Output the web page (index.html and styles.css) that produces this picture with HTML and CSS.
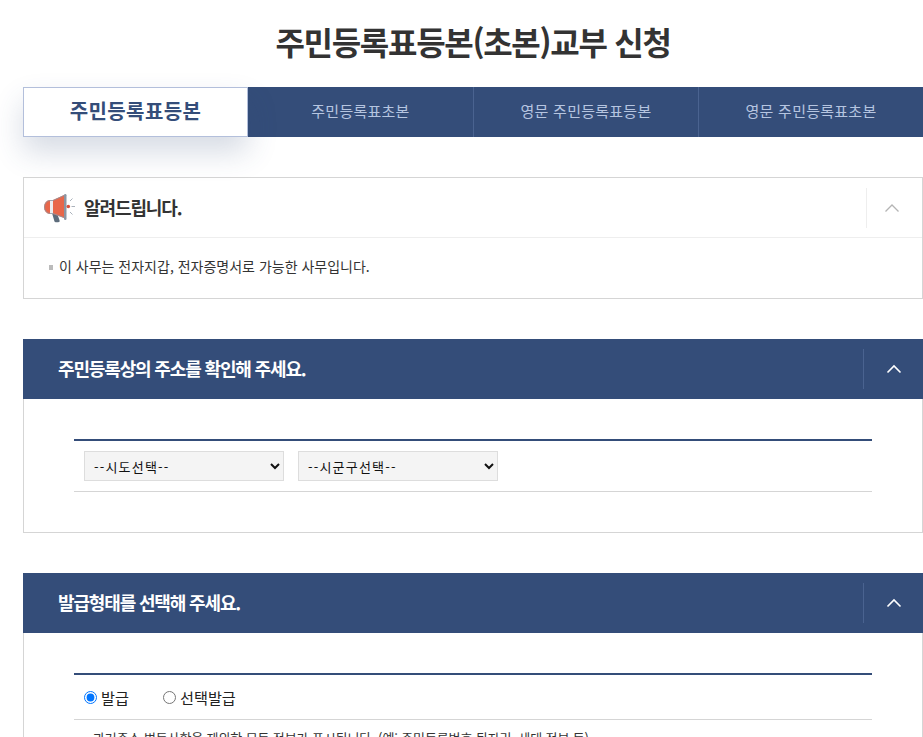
FILE: index.html
```html
<!DOCTYPE html>
<html lang="ko">
<head>
<meta charset="utf-8">
<title>주민등록표등본(초본)교부 신청</title>
<link rel="stylesheet" href="styles.css">
</head>
<body>
<main class="page">
  <h1 class="title">주민등록표등본(초본)교부 신청</h1>
  <ul class="tabs">
    <li class="tab active">주민등록표등본</li>
    <li class="tab">주민등록표초본</li>
    <li class="tab">영문 주민등록표등본</li>
    <li class="tab">영문 주민등록표초본</li>
  </ul>
  <section class="notice">
    <header class="notice-head">
      <svg class="mega" width="32" height="30" viewBox="0 0 32 30" aria-hidden="true">
        <path d="M8 20h5l2.500 7.200a1.500 1.500 0 0 1-1.400 2h-2.300a1.500 1.500 0 0 1-1.400-1z" fill="#5d6c7b"/>
        <path d="M7 7H6a6 7 0 0 0 0 14h1z" fill="#e8674a"/>
        <rect x="6" y="7" width="3" height="14" fill="#ecedf0"/>
        <path d="M9 7 20 2v23L9 21z" fill="#e8674a"/>
        <path d="M0.500 14a5.500 6.500 0 0 1 5.500-6.500h3L20 2.500" fill="none" stroke="#8b96a3" stroke-width=".8"/>
        <path d="M0.500 14a5.500 6.500 0 0 0 5.500 6.500h3L20 24.500" fill="none" stroke="#8b96a3" stroke-width=".8"/>
        <rect x="20" y="1" width="2.500" height="26" rx="1.200" fill="#8b96a3"/>
        <circle cx="24.300" cy="13.500" r="1.800" fill="#d9503c"/>
        <path d="M26 8l2.500-2.500M27.500 13.500H31M26 19l2.500 2.500" stroke="#aab2bb" stroke-width="1" fill="none"/>
      </svg>
      <h2 class="notice-title">알려드립니다.</h2>
      <span class="toggle toggle-light">
        <svg width="16" height="10" viewBox="0 0 16 10" aria-hidden="true"><path d="M1.500 8.500 8 2l6.500 6.500" fill="none" stroke="#b4b4b4" stroke-width="1.300"/></svg>
      </span>
    </header>
    <div class="notice-body">
      <p class="notice-item">이 사무는 전자지갑, 전자증명서로 가능한 사무입니다.</p>
    </div>
  </section>
  <section class="panel">
    <header class="panel-head">
      <h2 class="panel-title">주민등록상의 주소를 확인해 주세요.</h2>
      <span class="toggle toggle-dark">
        <svg width="16" height="10" viewBox="0 0 16 10" aria-hidden="true"><path d="M1.500 8.500 8 2l6.500 6.500" fill="none" stroke="#fff" stroke-width="1.600"/></svg>
      </span>
    </header>
    <div class="panel-body">
      <div class="field-row">
        <select class="sel"><option>--시도선택--</option></select>
        <select class="sel"><option>--시군구선택--</option></select>
      </div>
    </div>
  </section>
  <section class="panel">
    <header class="panel-head">
      <h2 class="panel-title">발급형태를 선택해 주세요.</h2>
      <span class="toggle toggle-dark">
        <svg width="16" height="10" viewBox="0 0 16 10" aria-hidden="true"><path d="M1.500 8.500 8 2l6.500 6.500" fill="none" stroke="#fff" stroke-width="1.600"/></svg>
      </span>
    </header>
    <div class="panel-body">
      <div class="field-row radios">
        <label class="radio"><input type="radio" name="kind" checked>발급</label>
        <label class="radio"><input type="radio" name="kind">선택발급</label>
      </div>
      <p class="desc">과거주소 변동사항을 제외한 모든 정보가 표시됩니다. (예: 주민등록번호 뒷자리, 세대 정보 등)</p>
    </div>
  </section>
</main>
</body>
</html>
```
FILE: styles.css
```css
html, body { margin: 0; padding: 0; height: 737px; overflow: hidden; background: #fff; }
body { font-family: "Noto Sans CJK KR", "Noto Sans", sans-serif; color: #333; }
.page { padding: 0 0 0 23px; }
.title { margin: 0; height: 87px; font-size: 32px; font-weight: 700; line-height: 83px; text-align: center; letter-spacing: -1.3px; color: #333; }
.tabs { display: grid; grid-template-columns: repeat(4, 225px); margin: 0 0 40px; padding: 0; list-style: none; height: 50px; background: #344d79; }
.tab { display: flex; align-items: center; justify-content: center; padding-bottom: 3px; font-size: 15px; letter-spacing: .25px; color: #b6c5e0; border-left: 1px solid #4a6390; box-sizing: border-box; }
.tab:nth-child(2) { border-left: 0; }
.tab.active { background: #fff; border: 1px solid #b3bfdb; color: #344d79; font-size: 20px; letter-spacing: .4px; font-weight: 700; box-shadow: 0 15px 30px rgba(52, 77, 121, .2); position: relative; }
.notice { border: 1px solid #d5d5d5; height: 122px; box-sizing: border-box; margin-bottom: 40px; }
.notice-head { display: flex; align-items: center; height: 59px; padding-left: 20px; border-bottom: 1px solid #eee; }
.mega { flex: none; }
.notice-title { margin: -2px 0 0 8px; font-size: 18px; font-weight: 700; letter-spacing: -1.1px; color: #333; flex: 1; }
.toggle { flex: none; display: flex; align-items: center; justify-content: center; box-sizing: border-box; height: 40px; border-left: 1px solid; }
.toggle-light { border-color: #eee; width: 56px; padding-right: 5px; }
.toggle-dark { border-color: #4a6390; width: 60px; }
.notice-body { padding: 18px 25px; }
.notice-item { margin: 0; padding-left: 10px; font-size: 14px; line-height: 20px; color: #333; position: relative; }
.notice-item::before { content: ""; position: absolute; left: 0; top: 9px; width: 4px; height: 5px; background: #bbb; }
.panel { border: 1px solid #d5d5d5; border-top: 0; box-sizing: border-box; margin-bottom: 40px; height: 194px; }
.panel-head { display: flex; align-items: center; justify-content: space-between; height: 60px; margin: 0 -1px; padding-left: 35px; background: #344d79; }
.panel-title { margin: -3px 0 0; font-size: 18px; font-weight: 700; letter-spacing: -1.15px; color: #fff; }
.panel-body { padding: 40px 50px 0; }
.field-row { display: flex; gap: 14px; padding: 10px; border-top: 2px solid #344d79; border-bottom: 1px solid #d5d5d5; }
.sel { width: 200px; height: 30px; padding: 0 5px; background: #f4f4f4; border: 1px solid #ddd; font-family: inherit; font-size: 13px; letter-spacing: 1.2px; color: #111; }
.radios { gap: 34px; align-items: center; padding: 0 10px; height: 44px; }
.radio { display: flex; align-items: center; font-size: 15.2px; color: #222; }
.radio input { margin: 0 4px 0 0; width: 13px; height: 13px; }
.desc { margin: 8px 0 0; padding-left: 19px; font-size: 13px; letter-spacing: -.12px; line-height: 20px; color: #333; }
```
